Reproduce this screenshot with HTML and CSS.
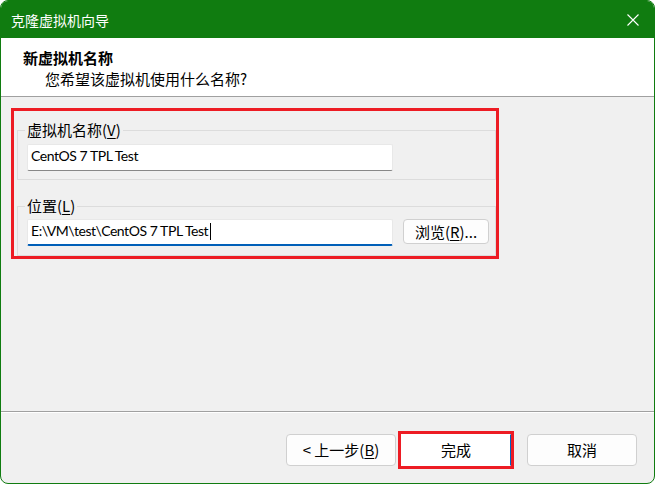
FILE: index.html
```html
<!DOCTYPE html>
<html lang="zh-CN">
<head>
<meta charset="utf-8">
<title>克隆虚拟机向导</title>
<link rel="stylesheet" href="styles.css">
</head>
<body>
<div class="window">
  <div class="titlebar">
    <span class="title">克隆虚拟机向导</span>
    <span class="close">
      <svg width="12" height="12" viewBox="0 0 12 12"><path d="M0.5 0.5 L11.5 11.5 M11.5 0.5 L0.5 11.5" stroke="#fff" stroke-width="1.1" fill="none"/></svg>
    </span>
  </div>
  <div class="header">
    <div class="h-title">新虚拟机名称</div>
    <div class="h-sub">您希望该虚拟机使用什么名称?</div>
  </div>
  <div class="content">
    <div class="highlight">
      <fieldset class="group">
        <legend>虚拟机名称(<u>V</u>)</legend>
        <div class="textbox">CentOS 7 TPL Test</div>
      </fieldset>
      <fieldset class="group group-loc">
        <legend>位置(<u>L</u>)</legend>
        <div class="row">
          <div class="textbox focused">E:\VM\test\CentOS 7 TPL Test<span class="caret"></span></div>
          <div class="btn browse">浏览(<u>R</u>)...</div>
        </div>
      </fieldset>
    </div>
  </div>
  <div class="footer">
    <div class="btn">&lt; 上一步(<u>B</u>)</div>
    <div class="highlight-btn"><div class="btn btn-default">完成</div></div>
    <div class="btn cancel">取消</div>
  </div>
</div>
</body>
</html>
```
FILE: styles.css
```css
* { box-sizing: border-box; }
html, body { margin: 0; padding: 0; background: #ffffff; }
body {
  font-family: "Noto Sans CJK SC", "Noto Sans", sans-serif;
  font-size: 15px;
  color: #000;
}
.window {
  width: 655px;
  height: 484px;
  border: 1px solid #107c10;
  border-radius: 8px;
  overflow: hidden;
  background: #f0f0f0;
  display: flex;
  flex-direction: column;
}
.titlebar {
  height: 37px;
  flex: none;
  background: #107c10;
  color: #fff;
  display: flex;
  align-items: center;
  justify-content: space-between;
  padding-left: 10px;
}
.title { font-size: 14px; line-height: 20px; }
.close {
  width: 42px;
  height: 37px;
  display: flex;
  align-items: center;
  justify-content: center;
}
.close svg { display: block; }
.header {
  height: 59px;
  flex: none;
  background: #fff;
  border-bottom: 1px solid #a0a0a0;
  padding: 10px 0 0 22px;
}
.h-title { font-weight: bold; line-height: 20px; }
.h-sub { line-height: 20px; margin-top: 1px; padding-left: 22px; }
.content {
  flex: 1;
  padding: 11px 0 0 10px;
}
.highlight {
  width: 488px;
  border: 3px solid #ed1c24;
  padding: 9px 0 0 3px;
}
.group {
  margin: 0;
  border: 1px solid #dcdcdc;
  padding: 4px 0 8px 9px;
  min-width: 0;
}
.group legend {
  margin-left: -2px;
  padding: 0 2px;
  line-height: 20px;
}
.group-loc { margin-top: 16px; padding-top: 3px; padding-bottom: 9px; }
.row { display: flex; align-items: flex-start; }
.textbox {
  width: 366px;
  height: 27px;
  background: #fff;
  border: 1px solid #e8e8e8;
  border-bottom: 1px solid #878787;
  border-radius: 2px;
  padding-left: 3px;
  line-height: 22px;
  white-space: nowrap;
  font-family: "Lato", "Noto Sans CJK SC", sans-serif;
  font-size: 14px;
  letter-spacing: -0.45px;
}
.textbox.focused {
  border-bottom: 2px solid #005fb8;
}
.caret {
  display: inline-block;
  width: 1px;
  height: 17px;
  background: #000;
  vertical-align: -4px;
  margin-left: 2px;
}
.btn {
  width: 110px;
  height: 32px;
  background: #fdfdfd;
  border: 1px solid #d0d0d0;
  border-radius: 4px;
  display: flex;
  align-items: center;
  justify-content: center;
  line-height: 20px;
}
.browse {
  width: 86px;
  height: 25px;
  margin-left: 10px;
}
.footer {
  flex: none;
  height: 72px;
  border-top: 1px solid #a0a0a0;
  box-shadow: inset 0 1px 0 #ffffff;
  display: flex;
  align-items: flex-start;
  justify-content: flex-end;
  padding: 19px 17px 0 0;
}
.footer > .btn { margin-top: 3px; }
.highlight-btn {
  border: 3px solid #ed1c24;
  margin-left: 2px;
  margin-right: 13px;
}
.btn-default {
  background: #fff;
  border-color: #fff #0067c0 #fff #fff;
  border-radius: 0;
}
u { text-underline-offset: 2px; }
```
